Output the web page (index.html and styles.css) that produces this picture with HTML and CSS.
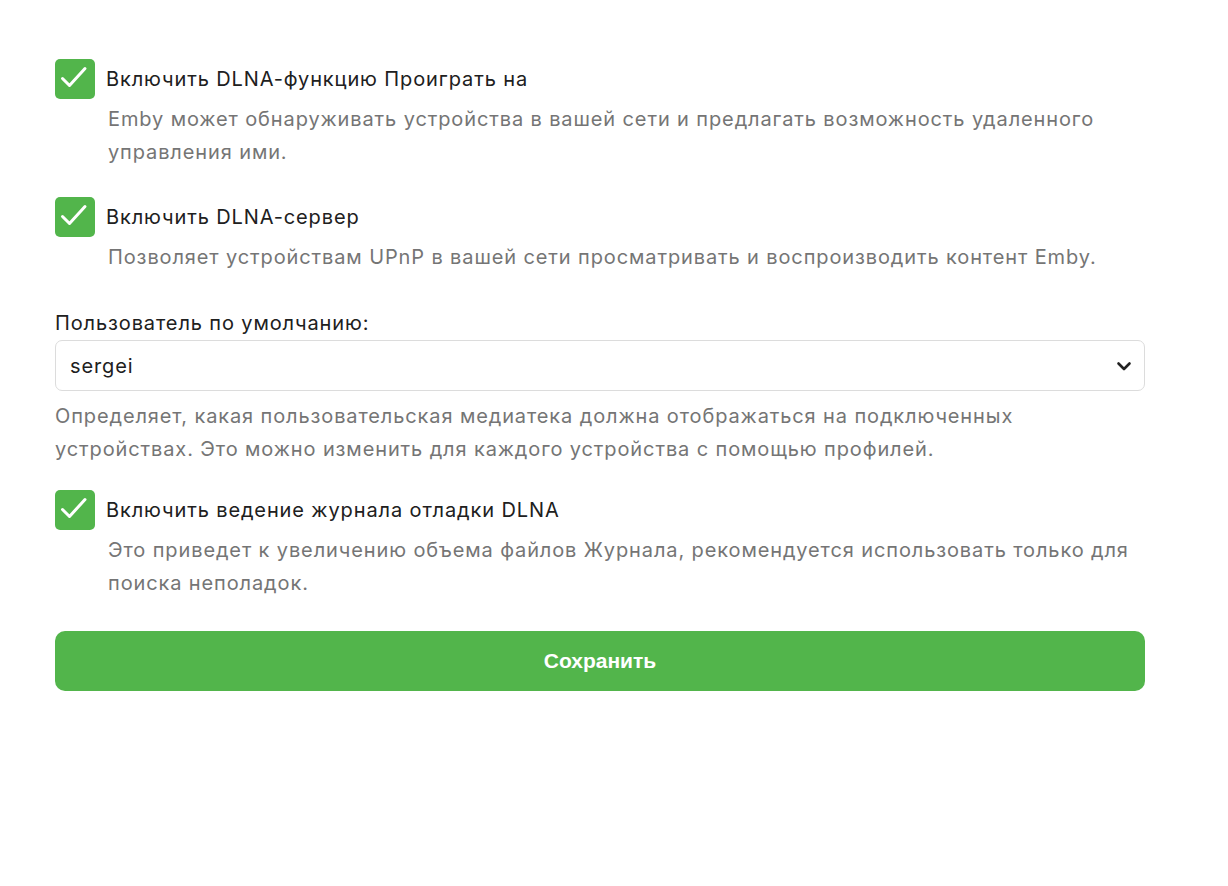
FILE: index.html
```html
<!DOCTYPE html>
<html lang="ru">
<head>
<meta charset="utf-8">
<link rel="stylesheet" href="styles.css">
</head>
<body>
<main class="page">
  <div class="field">
    <label class="check">
      <span class="box"><svg viewBox="0 0 40 40" width="40" height="40"><path d="M7.5 19.5 L14.5 26.5 L30 9.5" fill="none" stroke="#fff" stroke-width="3" stroke-linecap="round" stroke-linejoin="round"/></svg></span>
      <span class="check-label">Включить DLNA-функцию Проиграть на</span>
    </label>
    <div class="desc indent">Emby может обнаруживать устройства в вашей сети и предлагать возможность удаленного управления ими.</div>
  </div>

  <div class="field">
    <label class="check">
      <span class="box"><svg viewBox="0 0 40 40" width="40" height="40"><path d="M7.5 19.5 L14.5 26.5 L30 9.5" fill="none" stroke="#fff" stroke-width="3" stroke-linecap="round" stroke-linejoin="round"/></svg></span>
      <span class="check-label">Включить DLNA-сервер</span>
    </label>
    <div class="desc indent">Позволяет устройствам UPnP в вашей сети просматривать и воспроизводить контент Emby.</div>
  </div>

  <div class="field select-field">
    <div class="select-label">Пользователь по умолчанию:</div>
    <div class="select">
      <span>sergei</span>
      <svg class="chev" viewBox="0 0 20 20" width="20" height="20"><path d="M4.5 7.5 L10 13 L15.5 7.5" fill="none" stroke="#222" stroke-width="2.6" stroke-linecap="round" stroke-linejoin="round"/></svg>
    </div>
    <div class="desc">Определяет, какая пользовательская медиатека должна отображаться на подключенных устройствах. Это можно изменить для каждого устройства с помощью профилей.</div>
  </div>

  <div class="field">
    <label class="check">
      <span class="box"><svg viewBox="0 0 40 40" width="40" height="40"><path d="M7.5 19.5 L14.5 26.5 L30 9.5" fill="none" stroke="#fff" stroke-width="3" stroke-linecap="round" stroke-linejoin="round"/></svg></span>
      <span class="check-label">Включить ведение журнала отладки DLNA</span>
    </label>
    <div class="desc indent">Это приведет к увеличению объема файлов Журнала, рекомендуется использовать только для поиска неполадок.</div>
  </div>

  <button class="save">Сохранить</button>
</main>
</body>
</html>
```

FILE: styles.css
```css
* { box-sizing: border-box; }
html, body { margin: 0; background: #fff; }
body {
  font-family: Inter, "Noto Sans", sans-serif;
  color: #202020;
}
.page {
  width: 1090px;
  margin-left: 55px;
  padding-top: 59px;
}
.field { margin-bottom: 28px; }
.check {
  display: flex;
  align-items: center;
  gap: 11px;
  height: 40px;
}
.box {
  width: 40px;
  height: 40px;
  border-radius: 5px;
  background: #52b54b;
  display: block;
  flex: none;
}
.box svg { display: block; }
.check-label,
.select-label,
.desc,
.select {
  font-size: 20px;
  letter-spacing: 0.88px;
}
.check-label { line-height: 24px; }
.desc {
  line-height: 33px;
  color: #757575;
}
.indent {
  padding-left: 53px;
  margin-top: 4px;
}
.select-field { margin-top: 37px; margin-bottom: 24px; }
.select-label {
  line-height: 24px;
  margin-bottom: 5px;
}
.select {
  height: 51px;
  border: 1px solid #dcdcdc;
  border-radius: 7px;
  display: flex;
  align-items: center;
  justify-content: space-between;
  padding: 0 10px 0 14px;
  color: #202020;
}
.select-field .desc { margin-top: 9px; padding-right: 40px; }
.save {
  display: block;
  width: 100%;
  height: 60px;
  border: 0;
  border-radius: 10px;
  background: #52b54b;
  color: #fff;
  font-family: "Liberation Sans", Arial, sans-serif;
  font-weight: bold;
  font-size: 21px;
  margin-top: 31px;
}
```
